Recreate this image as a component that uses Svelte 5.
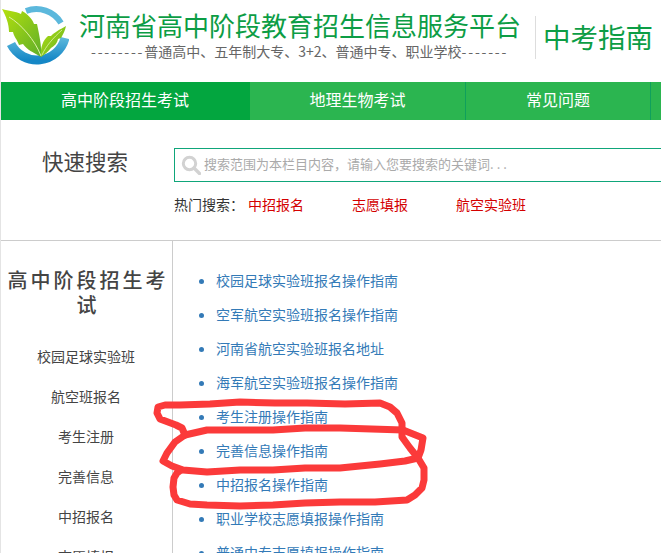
<script>
  const hot = ["中招报名", "志愿填报", "航空实验班"];
  const tabs = ["高中阶段招生考试", "地理生物考试", "常见问题", ""];
  const sideLinks = ["校园足球实验班", "航空班报名", "考生注册", "完善信息", "中招报名", "志愿填报"];
  const guides = [
    "校园足球实验班报名操作指南",
    "空军航空实验班报名操作指南",
    "河南省航空实验班报名地址",
    "海军航空实验班报名操作指南",
    "考生注册操作指南",
    "完善信息操作指南",
    "中招报名操作指南",
    "职业学校志愿填报操作指南",
    "普通中专志愿填报操作指南"
  ];
</script>

<div class="page">
  <header class="top">
    <svg class="logo" viewBox="0 0 68 68" width="68" height="68">
      <defs>
        <linearGradient id="leaf" x1="0" y1="0" x2="1" y2="1">
          <stop offset="0" stop-color="#b4e00c" />
          <stop offset="1" stop-color="#5fae2a" />
        </linearGradient>
        <linearGradient id="ring" x1="0" y1="0" x2="0" y2="1">
          <stop offset="0" stop-color="#5cb8dc" />
          <stop offset="1" stop-color="#1587c6" />
        </linearGradient>
      </defs>
      <path d="M25 11 A29 29 0 0 1 60 23" fill="none" stroke="#5cb8dc" stroke-width="6" />
      <path d="M10 44 A29 29 0 0 0 64 38" fill="none" stroke="url(#ring)" stroke-width="9" />
      <path d="M1 9 C8 11 14 11 20 14 L21 11 C27 14 32 20 33 24 L36 24 C38 34 41 46 40 57 C32 52 26 50 22 44 L18 45 C16 39 13 37 12 32 L8 32 C8 24 5 16 1 9 Z" fill="url(#leaf)" />
      <path d="M40 57 C39 48 42 40 47 36 L50 36 C54 32 58 30 65 26 C64 31 62 34 60 38 L57 39 C56 44 53 46 50 48 C47 52 43 55 40 57 Z" fill="url(#leaf)" />
      <path d="M8 17 C20 24 34 40 40 56" stroke="#dff2a8" stroke-width="1" fill="none" />
      <path d="M41 55 C45 46 52 38 61 30" stroke="#dff2a8" stroke-width="0.8" fill="none" />
    </svg>
    <div class="brand">
      <h1>河南省高中阶段教育招生信息服务平台</h1>
      <p><span class="dash">--------</span>普通高中、五年制大专、3+2、普通中专、职业学校<span class="dash">-------</span></p>
    </div>
    <div class="section-name">中考指南</div>
  </header>

  <nav class="tabs">
    {#each tabs as tab, i}
      <a href="#top" class="tab" class:active={i === 0}>{tab}</a>
    {/each}
  </nav>

  <section class="search">
    <div class="search-title">快速搜索</div>
    <div class="search-main">
      <div class="search-box">
        <svg viewBox="0 0 20 20" width="20" height="20">
          <circle cx="8.5" cy="8.5" r="6.2" fill="none" stroke="#d2d2d2" stroke-width="3" />
          <path d="M13 13 L18.5 18.5" stroke="#d2d2d2" stroke-width="3.4" stroke-linecap="round" />
        </svg>
        <span class="hint">搜索范围为本栏目内容，请输入您要搜索的关键词<span class="dots">...</span></span>
      </div>
      <div class="hot">
        <span class="hot-label">热门搜索：</span>
        {#each hot as word}
          <a href="#top">{word}</a>
        {/each}
      </div>
    </div>
  </section>

  <div class="content">
    <aside class="side">
      <h2>高中阶段招生考试</h2>
      {#each sideLinks as link}
        <a href="#top">{link}</a>
      {/each}
    </aside>
    <ul class="guides">
      {#each guides as guide}
        <li><a href="#top">{guide}</a></li>
      {/each}
    </ul>
  </div>

  <!-- hand-drawn red marks sit over the list -->
  <svg class="scribble" viewBox="0 0 661 553" width="661" height="553">
    <g fill="none" stroke="#fb3a3a" stroke-width="7" stroke-linejoin="round" stroke-linecap="round">
      <path d="M185 435 L182 428 L176 425 L160 419 L157 413 L158 407 L165 405 L180 405 L210 404 L240 402 L275 403 L307 403 L345 404 L380 403 L390 407 L397 413 L402 423 L402 437 L410 448 L418 458 L424 468 L424 480 L422 488 L415 495 L407 500 L375 502 L340 502 L305 503 L273 505 L240 506 L207 505 L190 504 L177 500 L174 495 L173 487 L174 478 L177 473 L181 470" />
      <path d="M185 435 L175 442 L167 453 L163 461 L172 466 L183 470 L207 472 L240 470 L273 470 L305 468 L340 468 L380 464 L405 461 L418 458" />
      <path d="M185 435 L207 430 L240 430 L273 430 L305 428 L340 428 L403 430 L423 438 L421 450 L418 458" />
    </g>
  </svg>
</div>

<style>
  :global(body) {
    margin: 0;
    background: #fff;
  }
  .page {
    position: relative;
    width: 661px;
    height: 553px;
    overflow: hidden;
    font-family: "Noto Sans CJK SC", "Liberation Sans", sans-serif;
    box-sizing: border-box;
    border-left: 1px solid #e4e4e4;
  }
  a {
    text-decoration: none;
  }
  .top {
    height: 82px;
    display: flex;
    align-items: flex-start;
    white-space: nowrap;
  }
  .logo {
    flex: none;
  }
  .brand {
    margin-left: 10px;
    width: 456px;
    flex: none;
  }
  h1 {
    margin: 9px 0 0;
    font-size: 26px;
    line-height: 32px;
    font-weight: 400;
    color: #0c9d45;
  }
  .brand p {
    margin: 1px 0 0 12px;
    font-size: 14px;
    line-height: 18px;
    color: #666;
  }
  .dash {
    letter-spacing: 1.8px;
  }
  .section-name {
    margin-top: 16px;
    padding-left: 7px;
    height: 43px;
    border-left: 1px solid #ddd;
    font-size: 27.5px;
    line-height: 41px;
    color: #0c9d45;
  }
  .tabs {
    height: 38px;
    display: flex;
    margin-left: -1px;
  }
  .tab {
    width: 215px;
    flex: none;
    box-sizing: border-box;
    background: #2bb550;
    border-right: 1px solid #0fa05c;
    color: #fff;
    font-size: 16px;
    line-height: 35px;
    text-align: center;
  }
  .tab.active {
    width: 250px;
    background: #03a63f;
    border-right: 0;
  }
  .tab:nth-child(2) {
    width: 216px;
  }
  .tab:nth-child(3) {
    width: 185px;
  }
  .search {
    height: 121px;
    box-sizing: border-box;
    border-bottom: 1px solid #ccc;
    display: flex;
  }
  .search-title {
    width: 173px;
    flex: none;
    box-sizing: border-box;
    padding: 26px 0 0 41px;
    font-size: 21.5px;
    line-height: 30px;
    color: #444;
  }
  .search-main {
    flex: 1;
    min-width: 0;
  }
  .search-box {
    margin-top: 28px;
    height: 34px;
    box-sizing: border-box;
    border: 1px solid #0fa67a;
    border-right: 0;
    display: flex;
    align-items: center;
    padding-left: 6px;
    gap: 3px;
    font-size: 13px;
    color: #aaa;
    white-space: nowrap;
  }
  .hint {
    padding-bottom: 3px;
  }
  .dots {
    letter-spacing: 3px;
  }
  .hot {
    margin-top: 12px;
    display: flex;
    font-size: 14px;
    line-height: 20px;
    color: #333;
  }
  .hot-label {
    width: 74px;
  }
  .hot a {
    color: #d40000;
    width: 104px;
  }
  .content {
    display: flex;
  }
  .side {
    width: 172px;
    flex: none;
    box-sizing: border-box;
    border-right: 1px solid #ccc;
    height: 320px;
    padding: 26px 1px 0 0;
    text-align: center;
  }
  h2 {
    margin: 0 0 19px;
    padding-left: 4px;
    font-size: 20px;
    line-height: 25px;
    font-weight: 500;
    letter-spacing: 3px;
    color: #444;
  }
  .side a {
    display: block;
    height: 40px;
    line-height: 40px;
    font-size: 14px;
    color: #444;
  }
  .guides {
    margin: 0;
    padding: 22px 0 0 43px;
    list-style: disc;
    color: #337ab7;
  }
  .guides li {
    height: 34px;
    line-height: 34px;
    font-size: 14px;
  }
  .guides a {
    color: #337ab7;
  }
  .scribble {
    position: absolute;
    top: 0;
    left: -1px;
    pointer-events: none;
  }
</style>
